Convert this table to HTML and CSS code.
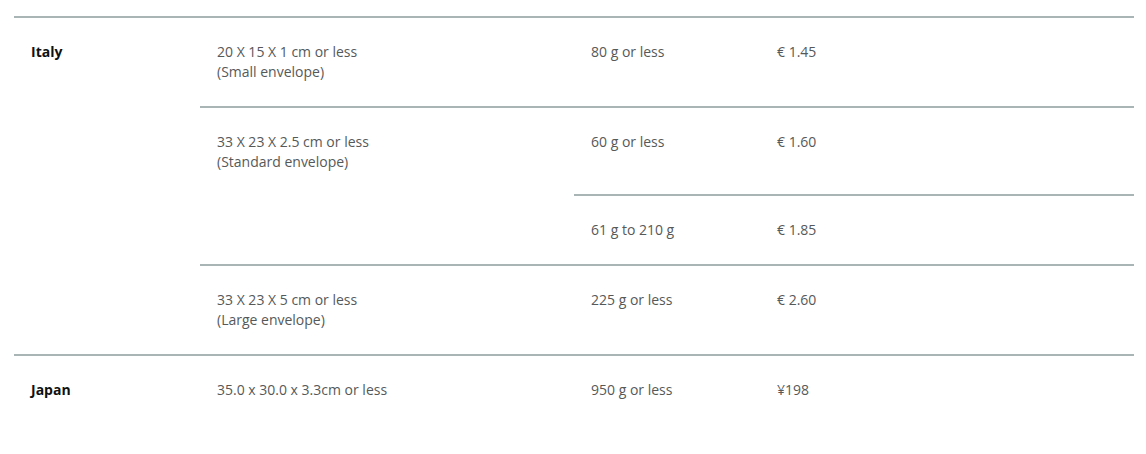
FILE: index.html
```html
<!DOCTYPE html>
<html lang="en">
<head>
<meta charset="utf-8">
<title>Rates</title>
<link rel="stylesheet" href="styles.css">
</head>
<body>
<div class="rates">
  <div class="country">
    <div class="cell name">Italy</div>
    <div class="sizes">
      <div class="size">
        <div class="cell desc">20 X 15 X 1 cm or less<br>(Small envelope)</div>
        <div class="weights">
          <div class="weight"><div class="cell w">80 g or less</div><div class="cell price">€ 1.45</div></div>
        </div>
      </div>
      <div class="size">
        <div class="cell desc">33 X 23 X 2.5 cm or less<br>(Standard envelope)</div>
        <div class="weights">
          <div class="weight tall"><div class="cell w">60 g or less</div><div class="cell price">€ 1.60</div></div>
          <div class="weight"><div class="cell w">61 g to 210 g</div><div class="cell price">€ 1.85</div></div>
        </div>
      </div>
      <div class="size">
        <div class="cell desc">33 X 23 X 5 cm or less<br>(Large envelope)</div>
        <div class="weights">
          <div class="weight"><div class="cell w">225 g or less</div><div class="cell price">€ 2.60</div></div>
        </div>
      </div>
    </div>
  </div>
  <div class="country">
    <div class="cell name">Japan</div>
    <div class="sizes">
      <div class="size">
        <div class="cell desc">35.0 x 30.0 x 3.3cm or less</div>
        <div class="weights">
          <div class="weight"><div class="cell w">950 g or less</div><div class="cell price">¥198</div></div>
        </div>
      </div>
    </div>
  </div>
</div>
</body>
</html>
```
FILE: styles.css
```css
html, body {
  margin: 0;
  padding: 0;
  background: #ffffff;
}
body {
  font-family: "Open Sans", "Noto Sans", sans-serif;
  font-size: 14px;
  line-height: 20px;
  color: #565959;
}
.rates {
  width: 1120px;
  margin: 16px 0 0 14px;
}
.country {
  display: flex;
  border-top: 2px solid #a9b5b5;
}
.cell {
  padding: 24px 17px;
  box-sizing: border-box;
}
.name {
  width: 186px;
  flex: none;
  font-weight: 700;
  color: #0f1111;
}
.sizes {
  flex: 1;
}
.size {
  display: flex;
}
.size + .size {
  border-top: 2px solid #a9b5b5;
}
.desc {
  width: 374px;
  flex: none;
}
.weights {
  flex: 1;
}
.weight {
  display: flex;
}
.weight.tall {
  min-height: 86px;
}
.weight + .weight {
  border-top: 2px solid #a9b5b5;
}
.w {
  width: 186px;
  flex: none;
}
.price {
  flex: 1;
}
```
